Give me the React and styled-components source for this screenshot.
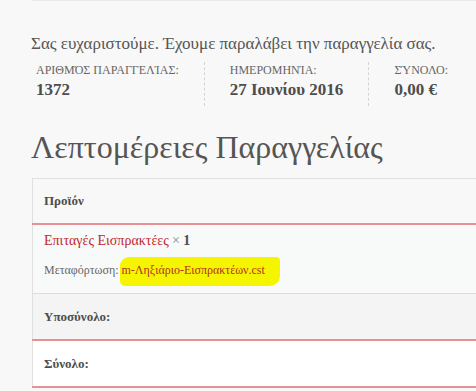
import React from "react"
import styled, { createGlobalStyle } from "styled-components"

const GlobalStyle = createGlobalStyle`
  html, body {
    margin: 0;
    padding: 0;
    background: #f8f8f8;
    overflow: hidden;
  }
  body {
    font-family: "Liberation Serif", "Times New Roman", serif;
    color: #555555;
  }
`

const Page = styled.div`
  padding-left: 31px;
`

const TopRule = styled.div`
  margin-left: 1px;
  border-top: 1px solid #e8e8e8;
`

const Thanks = styled.p`
  margin: 31px 0 0;
  font-size: 17px;
  line-height: 24px;
  color: #555555;
`

const Overview = styled.ul`
  display: flex;
  margin: 6px 0 0;
  padding: 0 0 0 5px;
  list-style: none;
`

const OverviewItem = styled.li`
  margin-right: ${(p) => (p.$last ? 0 : 25)}px;
  padding-right: ${(p) => (p.$last ? 0 : 25)}px;
  border-right: ${(p) => (p.$last ? "none" : "1px dashed #d4d4d4")};
  font-size: 12px;
  line-height: 16px;
  text-transform: uppercase;
  color: #666666;
`

const OverviewValue = styled.strong`
  display: block;
  margin-top: 2px;
  padding-bottom: 6px;
  font-size: 17px;
  line-height: 20px;
  text-transform: none;
  color: #4d4d4d;
`

const Heading = styled.h2`
  margin: 21px 0 0;
  font-size: 32px;
  line-height: 40px;
  font-weight: normal;
  color: #555555;
`

const Table = styled.table`
  width: calc(100% - 1px);
  margin-top: 11px;
  margin-left: 1px;
  border-collapse: collapse;
  border-top: 1px solid #e0e0e0;
  border-left: 1px solid #e0e0e0;
`

const Cell = styled.td`
  padding: 0 11px;
  height: ${(p) => p.$h}px;
  background: ${(p) => p.$bg || "transparent"};
  border-bottom: ${(p) => p.$border};
  font-size: 13px;
  color: #4d4d4d;
  vertical-align: middle;
`

const HeadCell = styled(Cell).attrs({ as: "th" })`
  text-align: left;
  font-weight: bold;
`

const ProductLink = styled.a`
  font-size: 14px;
  color: #c0282d;
  text-decoration: none;
`

const Quantity = styled.span`
  font-size: 14px;
  color: #888888;

  strong {
    color: #4d4d4d;
  }
`

const Meta = styled.div`
  margin-top: 8px;
  font-size: 12px;
  color: #666666;
`

const FileName = styled.span`
  display: inline-block;
  margin-left: -2px;
  padding: 6px 15px 8px 2px;
  border-radius: 9px 4px 10px 5px;
  background: #f6f500;
  color: #b03222;
`

const redLine = "2px solid #e79196"
const grayLine = "1px solid #dcdcdc"

const App = () => (
  <>
    <GlobalStyle />
    <Page>
      <TopRule />
      <Thanks>Σας ευχαριστούμε. Έχουμε παραλάβει την παραγγελία σας.</Thanks>
      <Overview>
        <OverviewItem>
          Αριθμός Παραγγελίας:
          <OverviewValue>1372</OverviewValue>
        </OverviewItem>
        <OverviewItem>
          Ημερομηνία:
          <OverviewValue>27 Ιουνίου 2016</OverviewValue>
        </OverviewItem>
        <OverviewItem $last>
          Σύνολο:
          <OverviewValue>0,00 €</OverviewValue>
        </OverviewItem>
      </Overview>
      <Heading>Λεπτομέρειες Παραγγελίας</Heading>
      <Table>
        <thead>
          <tr>
            <HeadCell $h={44} $border={redLine}>Προϊόν</HeadCell>
          </tr>
        </thead>
        <tbody>
          <tr>
            <Cell $h={68} $bg="#f8f9f9" $border={grayLine}>
              <ProductLink href="#">Επιταγές Εισπρακτέες</ProductLink>{" "}
              <Quantity>
                × <strong>1</strong>
              </Quantity>
              <Meta>
                Μεταφόρτωση: <FileName>m-Ληξιάριο-Εισπρακτέων.cst</FileName>
              </Meta>
            </Cell>
          </tr>
        </tbody>
        <tfoot>
          <tr>
            <HeadCell $h={45} $bg="#f4f4f4" $border={redLine}>Υποσύνολο:</HeadCell>
          </tr>
          <tr>
            <HeadCell $h={45} $bg="#ffffff" $border={redLine}>Σύνολο:</HeadCell>
          </tr>
        </tfoot>
      </Table>
    </Page>
  </>
)

export default App
